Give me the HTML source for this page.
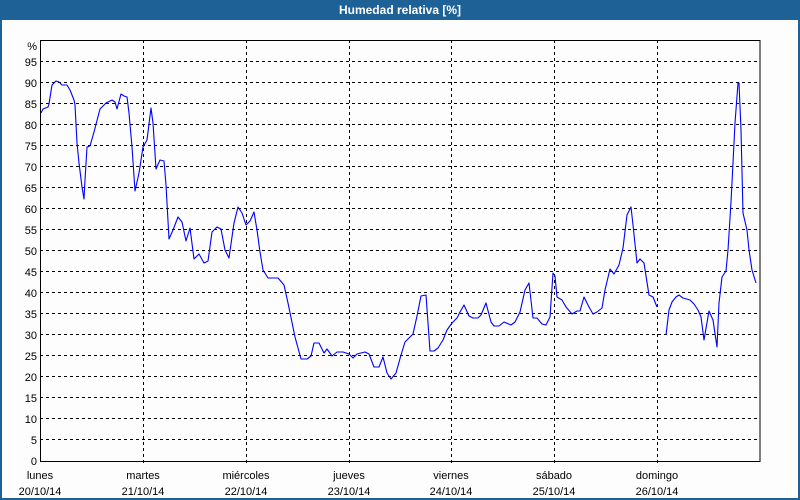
<!DOCTYPE html>
<html><head><meta charset="utf-8"><style>
html,body{margin:0;padding:0;width:800px;height:500px;overflow:hidden;background:#fff}
svg{display:block}
text{font-family:"Liberation Sans",sans-serif;font-size:11px;fill:#000}
</style></head><body>
<svg width="800" height="500" viewBox="0 0 800 500">
<rect x="0" y="0" width="800" height="500" fill="#1e6196"/>
<rect x="2" y="20" width="796" height="478" fill="#fdfdfd"/>
<text x="400" y="14" text-anchor="middle" style="font-weight:bold;font-size:12px;fill:#fff">Humedad relativa [%]</text>
<g stroke="#000" stroke-width="1" stroke-dasharray="3,3" fill="none" shape-rendering="crispEdges">
<path d="M40 439.5H760M40 418.5H760M40 397.5H760M40 376.5H760M40 355.5H760M40 334.5H760M40 313.5H760M40 292.5H760M40 271.5H760M40 250.5H760M40 229.5H760M40 208.5H760M40 187.5H760M40 166.5H760M40 145.5H760M40 124.5H760M40 103.5H760M40 82.5H760M40 61.5H760"/>
<path d="M143.5 40V466M246.5 40V466M349.5 40V466M451.5 40V466M554.5 40V466M657.5 40V466"/>
</g>
<rect x="40.5" y="40.5" width="719.5" height="421" fill="none" stroke="#000" stroke-width="1" shape-rendering="crispEdges"/>
<g text-anchor="end">
<text x="37" y="465">0</text><text x="37" y="444">5</text><text x="37" y="423">10</text><text x="37" y="402">15</text><text x="37" y="381">20</text><text x="37" y="360">25</text><text x="37" y="339">30</text><text x="37" y="318">35</text><text x="37" y="297">40</text><text x="37" y="276">45</text><text x="37" y="255">50</text><text x="37" y="234">55</text><text x="37" y="213">60</text><text x="37" y="192">65</text><text x="37" y="171">70</text><text x="37" y="150">75</text><text x="37" y="129">80</text><text x="37" y="108">85</text><text x="37" y="87">90</text><text x="37" y="66">95</text><text x="37" y="50">%</text>
</g>
<g text-anchor="middle">
<text x="40" y="479">lunes</text><text x="40" y="495">20/10/14</text>
<text x="143" y="479">martes</text><text x="143" y="495">21/10/14</text>
<text x="246" y="479">miércoles</text><text x="246" y="495">22/10/14</text>
<text x="349" y="479">jueves</text><text x="349" y="495">23/10/14</text>
<text x="451" y="479">viernes</text><text x="451" y="495">24/10/14</text>
<text x="554" y="479">sábado</text><text x="554" y="495">25/10/14</text>
<text x="657" y="479">domingo</text><text x="657" y="495">26/10/14</text>
</g>
<g fill="none" stroke="#0000ff" stroke-width="1.1" stroke-linejoin="round">
<polyline points="41,113 43,109 48,107 49,104 52,85 56,81 59,82 62,85 67,85 70,90 74,100 75,105 77,143 79,163 82,187 84,199 85,180 87,147 90,146 94,132 100,109 106,103 112,100 115,102 117,109 121,94 124,96 127,97 129,113 132,147 135,191 139,173 143,147 147,140 151,108 153,123 156,169 160,160 164,161 166,185 169,239 173,230 178,217 182,222 186,241 190,228 194,259 199,254 204,263 208,261 212,232 217,227 221,229 225,250 229,258 234,223 238,207 242,213 246,225 250,221 254,212 257,230 260,252 263,270 268,278 278,278 284,285 288,303 295,337 301,359 307,359 311,356 314,343 319,343 324,353 327,349 332,356 337,352 343,352 349,354 353,358 357,354 365,352 369,354 374,367 379,367 383,357 387,373 391,379 396,373 401,355 405,342 413,334 417,316 421,296 426,295 430,351 434,351 438,348 443,340 447,330 452,323 457,318 460,312 464,305 469,316 473,318 478,318 481,315 486,303 491,322 494,326 499,326 504,322 511,325 515,322 520,312 525,290 529,283 533,318 537,318 542,324 546,325 550,317 553,273 555,276 557,297 562,300 566,307 572,314 577,311 580,311 584,297 589,307 593,314 597,312 602,308 605,290 610,269 614,274 619,265 623,248 627,215 631,207 633,225 637,263 640,259 644,263 649,295 653,297 657,307"/>
<polyline points="666,335 669,310 672,302 676,297 679,295 683,298 690,300 694,304 698,310 701,317 704,340 709,311 713,320 717,347 719,303 722,277 726,271 728,250 731,202 733,163 735,123 738,83 739,83 741,130 743,213 747,230 749,250 752,270 756,283"/>
</g>
</svg>
</body></html>
